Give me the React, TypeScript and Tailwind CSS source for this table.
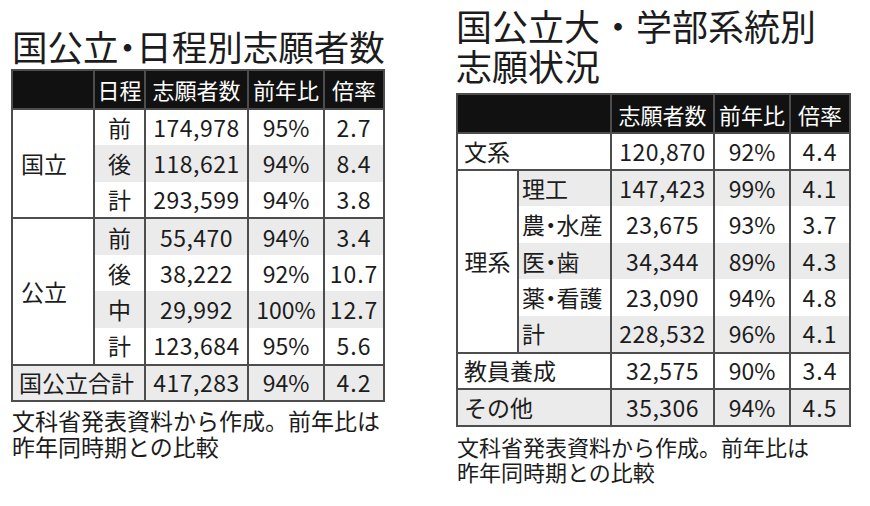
import React from 'react'

type Row = {
  label?: string
  labelSpan?: number
  sub?: string
  full?: string
  count: string
  ratio: string
  rate: string
}

const BORDER = 'border-[#4d4d4d]'

const leftRows: Row[] = [
  { label: '国立', labelSpan: 3, sub: '前', count: '174,978', ratio: '95%', rate: '2.7' },
  { sub: '後', count: '118,621', ratio: '94%', rate: '8.4' },
  { sub: '計', count: '293,599', ratio: '94%', rate: '3.8' },
  { label: '公立', labelSpan: 4, sub: '前', count: '55,470', ratio: '94%', rate: '3.4' },
  { sub: '後', count: '38,222', ratio: '92%', rate: '10.7' },
  { sub: '中', count: '29,992', ratio: '100%', rate: '12.7' },
  { sub: '計', count: '123,684', ratio: '95%', rate: '5.6' },
  { full: '国公立合計', count: '417,283', ratio: '94%', rate: '4.2' },
]

const rightRows: Row[] = [
  { full: '文系', count: '120,870', ratio: '92%', rate: '4.4' },
  { label: '理系', labelSpan: 5, sub: '理工', count: '147,423', ratio: '99%', rate: '4.1' },
  { sub: '農・水産', count: '23,675', ratio: '93%', rate: '3.7' },
  { sub: '医・歯', count: '34,344', ratio: '89%', rate: '4.3' },
  { sub: '薬・看護', count: '23,090', ratio: '94%', rate: '4.8' },
  { sub: '計', count: '228,532', ratio: '96%', rate: '4.1' },
  { full: '教員養成', count: '32,575', ratio: '90%', rate: '3.4' },
  { full: 'その他', count: '35,306', ratio: '94%', rate: '4.5' },
]

// narrow the middle dot the way the print font does (proportional alternates)
const Dotted = ({ text }: { text: string }) => {
  const parts = text.split('・')
  return (
    <>
      {parts.map((p, i) => (
        <React.Fragment key={i}>
          {i > 0 && <span className="[font-feature-settings:'palt']">・</span>}
          {p}
        </React.Fragment>
      ))}
    </>
  )
}

const StatTable = ({
  rows,
  cols,
  head,
  subAlign,
  labelPad,
}: {
  rows: Row[]
  cols: number[]
  head: { text: string; span?: number }[]
  subAlign: string
  labelPad: string
}) => {
  const cell = `border-x-2 ${BORDER}`
  return (
    <table className={`table-fixed border-collapse border-2 ${BORDER}`} style={{ width: cols.reduce((a, b) => a + b, 0) }}>
      <colgroup>
        {cols.map((w, i) => (
          <col key={i} style={{ width: w }} />
        ))}
      </colgroup>
      <thead>
        <tr className="bg-[#111] text-white text-[22px] leading-none">
          {head.map((h, i) => (
            <th key={i} colSpan={h.span} className={`${cell} h-[39px] font-normal text-center`}>
              {h.text}
            </th>
          ))}
        </tr>
      </thead>
      <tbody className="text-[23px] leading-none text-[#1c1c1c]">
        {rows.map((r, i) => {
          const grey = i % 2 === 1 ? 'bg-[#ebebeb]' : 'bg-white'
          const groupStart = r.label || r.full || i === 0
          const top = groupStart ? `border-t-2 ${BORDER}` : ''
          return (
            <tr key={i} className="h-[36.6px]">
              {r.label && (
                <td rowSpan={r.labelSpan} className={`${cell} border-y-2 bg-white ${labelPad}`}>
                  {r.label}
                </td>
              )}
              {r.full ? (
                <td colSpan={2} className={`${cell} ${top} ${grey} pl-[6px] text-left`}>
                  {r.full}
                </td>
              ) : (
                <td className={`${cell} ${top} ${grey} ${subAlign} whitespace-nowrap`}>
                  <Dotted text={r.sub ?? ''} />
                </td>
              )}
              <td className={`${cell} ${top} ${grey} text-center tracking-[0.5px]`}>{r.count}</td>
              <td className={`${cell} ${top} ${grey} text-center`}>{r.ratio}</td>
              <td className={`${cell} ${top} ${grey} text-center tracking-[1px]`}>{r.rate}</td>
            </tr>
          )
        })}
      </tbody>
    </table>
  )
}

export default function App() {
  return (
    <div className="w-[870px] h-[506px] bg-white font-['Noto_Sans_CJK_JP','Noto_Sans',sans-serif] text-[#1c1c1c] flex pl-[11px]">
      {/* left: by schedule */}
      <div className="flex flex-col w-[380px] shrink-0">
        <h1 className="mt-[28px] ml-[1px] text-[35.5px] leading-none font-normal whitespace-nowrap">
          <Dotted text="国公立・日程別志願者数" />
        </h1>
        <div className="mt-[5px]">
          <StatTable
            rows={leftRows}
            cols={[82, 51, 103, 76, 60]}
            head={[{ text: '' }, { text: '日程' }, { text: '志願者数' }, { text: '前年比' }, { text: '倍率' }]}
            subAlign="text-center"
            labelPad="pl-[8px] text-left"
          />
        </div>
        <p className="mt-[5px] ml-[1px] text-[23px] leading-[26px]">
          文科省発表資料から作成。前年比は
          <br />
          昨年同時期との比較
        </p>
      </div>

      {/* right: by faculty */}
      <div className="flex flex-col ml-[65px]">
        <h1 className="mt-[5px] text-[36px] leading-[40px] font-normal whitespace-nowrap">
          国公立大・学部系統別
          <br />
          志願状況
        </h1>
        <div className="mt-[8px]">
          <StatTable
            rows={rightRows}
            cols={[61, 93, 103, 76, 60]}
            head={[{ text: '', span: 2 }, { text: '志願者数' }, { text: '前年比' }, { text: '倍率' }]}
            subAlign="text-left pl-[3px]"
            labelPad="text-center"
          />
        </div>
        <p className="mt-[7px] ml-[1px] text-[22px] leading-[25px]">
          文科省発表資料から作成。前年比は
          <br />
          昨年同時期との比較
        </p>
      </div>
    </div>
  )
}
